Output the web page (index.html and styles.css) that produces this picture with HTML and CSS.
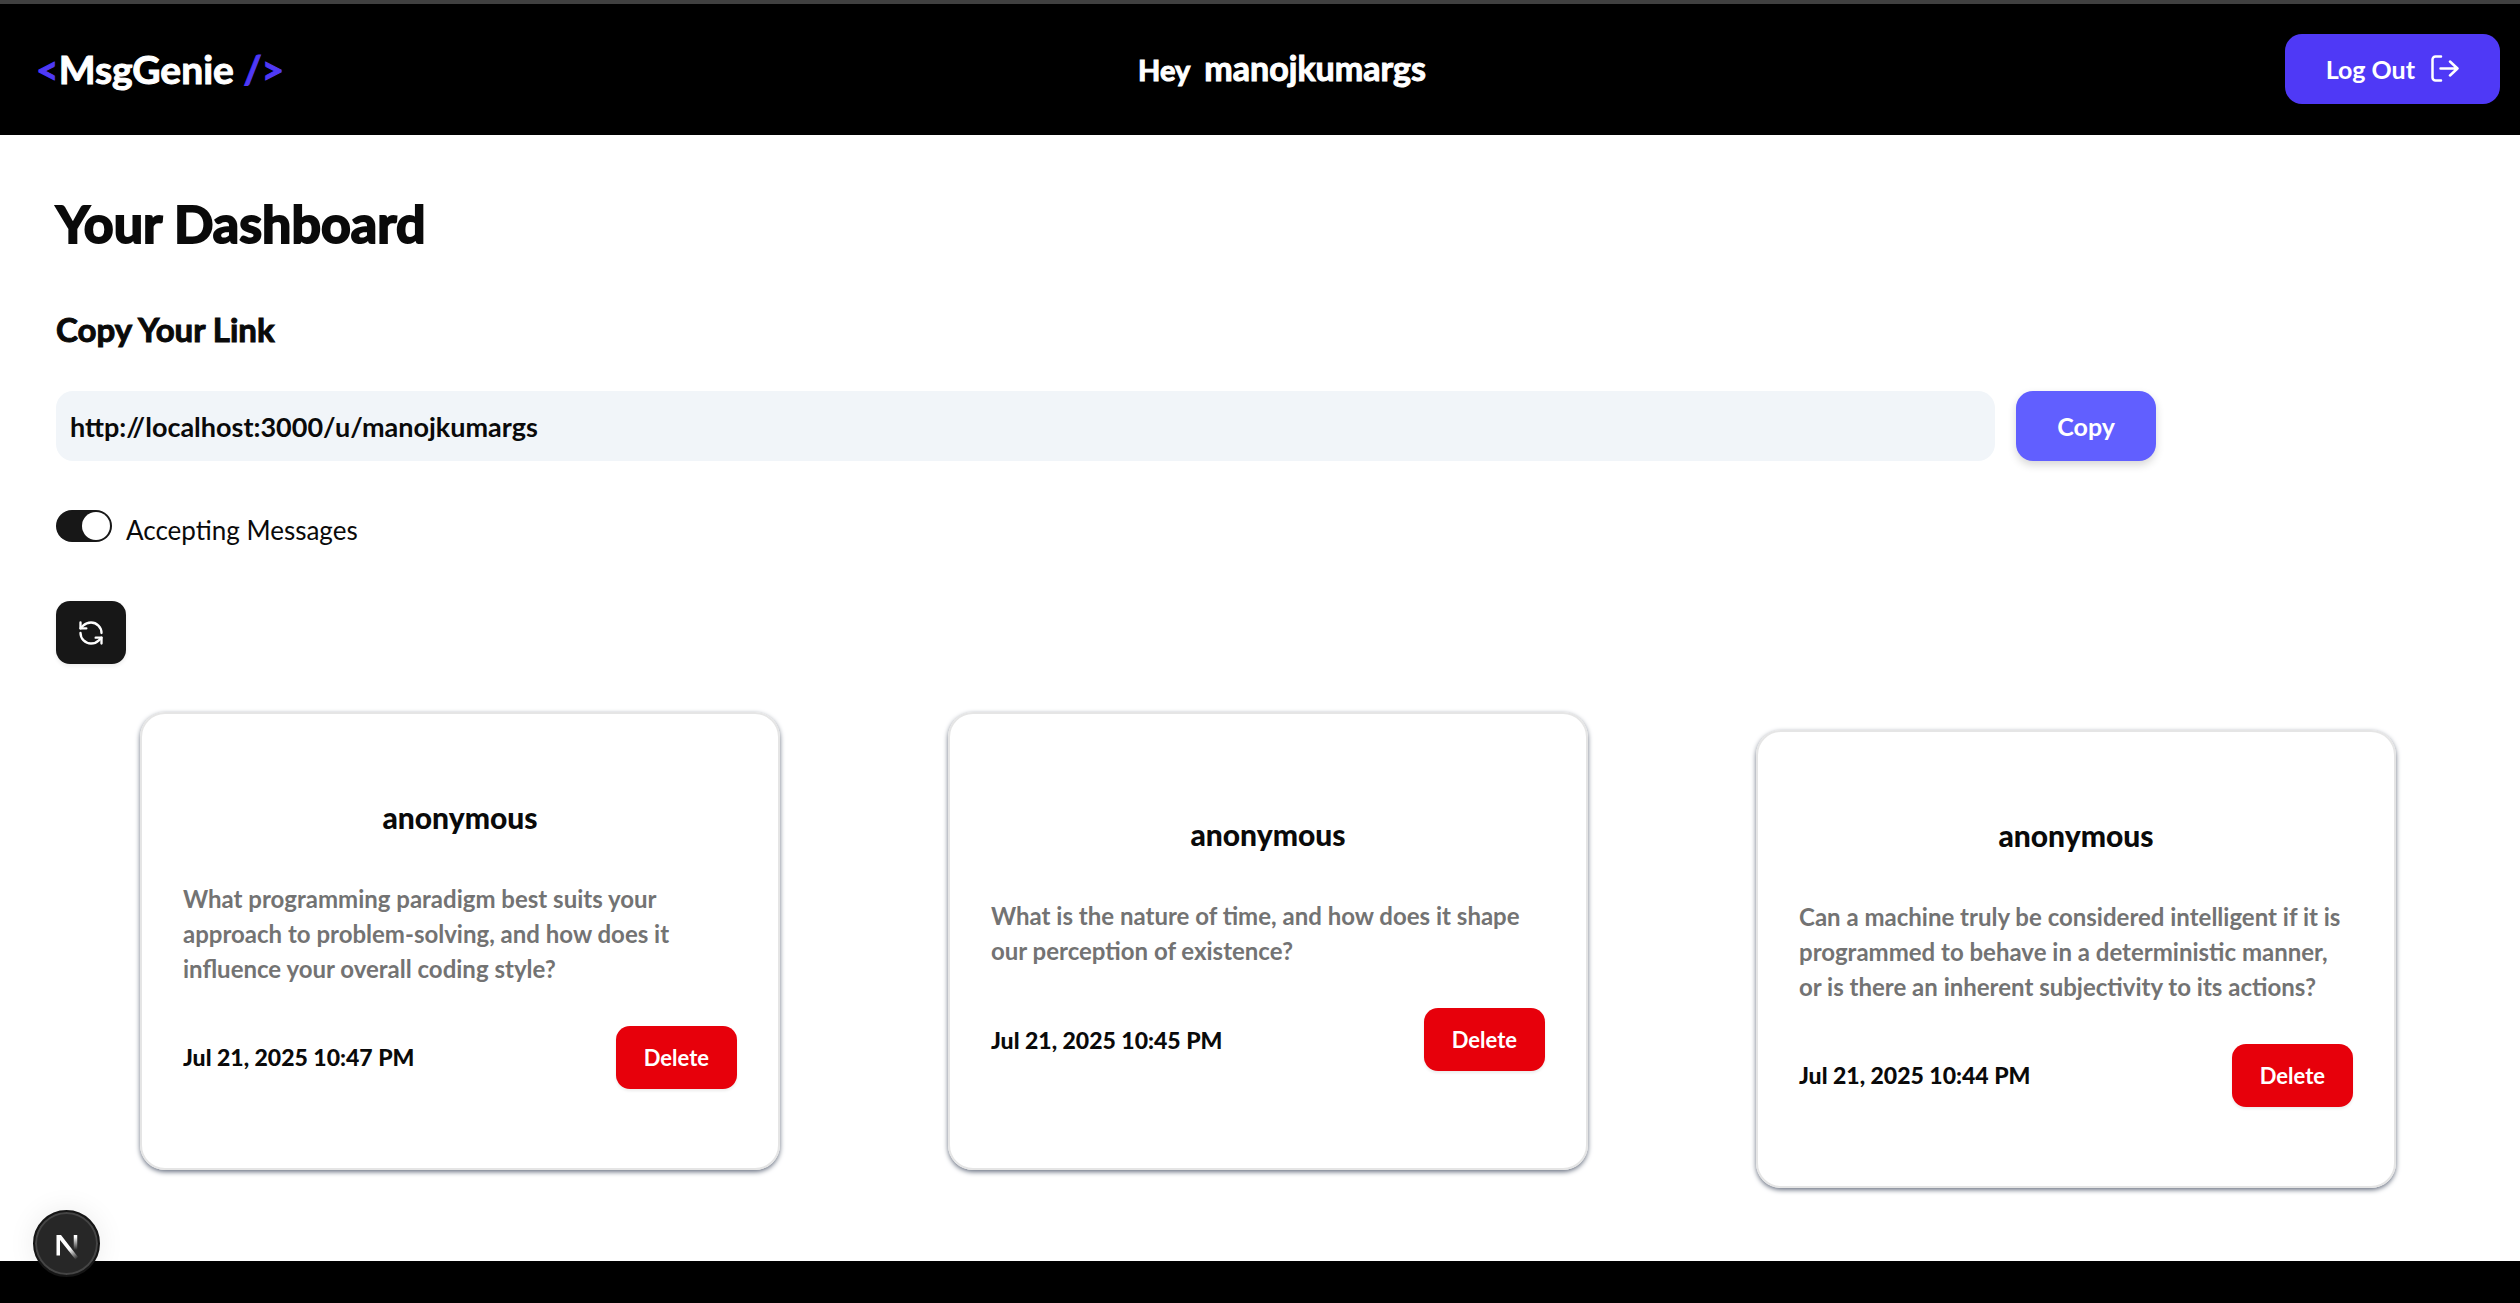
FILE: index.html
```html
<!DOCTYPE html>
<html lang="en">
<head>
<meta charset="utf-8">
<title>MsgGenie</title>
<link rel="stylesheet" href="styles.css">
</head>
<body>
<header class="navbar">
  <a class="logo" href="#"><span class="accent">&lt;</span>MsgGenie <span class="accent">/&gt;</span></a>
  <p class="greeting">Hey <strong class="user">manojkumargs</strong></p>
  <button class="btn btn-logout" type="button">Log Out
    <svg class="icon" viewBox="0 0 28 28" fill="none" stroke="currentColor" stroke-width="2.500" stroke-linecap="round" stroke-linejoin="round" aria-hidden="true"><path d="M10 1.500H4.500a3 3 0 0 0-3 3v18a3 3 0 0 0 3 3H10M9.500 13.500h17M19 6.500l7.500 7L19 20.500"/></svg>
  </button>
</header>
<main class="dashboard">
  <h1 class="title">Your Dashboard</h1>
  <h2 class="subtitle"><label for="link">Copy Your Link</label></h2>
  <div class="link-row">
    <input class="link-input" id="link" type="text" value="http://localhost:3000/u/manojkumargs" readonly>
    <button class="btn btn-copy" type="button">Copy</button>
  </div>
  <div class="switch-row">
    <input class="switch" id="accepting" type="checkbox" role="switch" checked>
    <label class="switch-label" for="accepting">Accepting Messages</label>
  </div>
  <button class="btn-refresh" type="button" aria-label="Refresh messages">
    <svg class="icon" viewBox="0 0 24 24" fill="none" stroke="currentColor" stroke-width="2" stroke-linecap="round" stroke-linejoin="round" aria-hidden="true"><path d="M21 12a9 9 0 0 0-9-9 9.750 9.750 0 0 0-6.740 2.740L3 8"/><path d="M3 3v5h5"/><path d="M3 12a9 9 0 0 0 9 9 9.750 9.750 0 0 0 6.740-2.740L21 16"/><path d="M16 16h5v5"/></svg>
  </button>
  <section class="messages" aria-label="Messages">
    <article class="card">
      <h3 class="sender">anonymous</h3>
      <p class="message">What programming paradigm best suits your<br>approach to problem-solving, and how does it<br>influence your overall coding style?</p>
      <div class="card-footer"><time class="date" datetime="2025-07-21T22:47">Jul 21, 2025 10:47 PM</time><button class="btn-delete" type="button">Delete</button></div>
    </article>
    <article class="card">
      <h3 class="sender">anonymous</h3>
      <p class="message">What is the nature of time, and how does it shape<br>our perception of existence?</p>
      <div class="card-footer"><time class="date" datetime="2025-07-21T22:45">Jul 21, 2025 10:45 PM</time><button class="btn-delete" type="button">Delete</button></div>
    </article>
    <article class="card card-lowered">
      <h3 class="sender">anonymous</h3>
      <p class="message">Can a machine truly be considered intelligent if it is<br>programmed to behave in a deterministic manner,<br>or is there an inherent subjectivity to its actions?</p>
      <div class="card-footer"><time class="date" datetime="2025-07-21T22:44">Jul 21, 2025 10:44 PM</time><button class="btn-delete" type="button">Delete</button></div>
    </article>
  </section>
</main>
<button class="dev-badge" type="button" aria-label="Open developer tools">
  <svg class="dev-logo" viewBox="0 0 40 40" fill="none" aria-hidden="true">
    <defs>
      <linearGradient id="diagonal" gradientUnits="userSpaceOnUse" x1="23" y1="25" x2="30" y2="35"><stop stop-color="#fff"/><stop offset="1" stop-color="#fff" stop-opacity="0"/></linearGradient>
      <linearGradient id="stem" gradientUnits="userSpaceOnUse" x1="28" y1="13" x2="28" y2="26"><stop stop-color="#fff"/><stop offset="1" stop-color="#fff" stop-opacity="0"/></linearGradient>
    </defs>
    <path d="M9.500 11h4.500l17 22-2.500 2.500L13 16v15.500H9.500z" fill="url(#diagonal)"/>
    <path d="M28.500 11v15" stroke="url(#stem)" stroke-width="3.500"/>
  </svg>
</button>
</body>
</html>
```
FILE: styles.css
```css
* { box-sizing: border-box; }

body {
  display: flex;
  flex-direction: column;
  min-height: 100vh;
  margin: 0;
  background: #000;
  color: #0a0a0a;
  font-family: Lato, "Open Sans", sans-serif;
}

h1, h2, h3, p { margin: 0; }

button, input { border: 0; font: inherit; }

button { cursor: pointer; }

.navbar {
  display: grid;
  grid-template-columns: 1fr auto 1fr;
  align-items: center;
  padding: 30px 20px 31px 36px;
  border-top: 4px solid #404040;
  background: #000;
  color: #fff;
}

.logo {
  justify-self: start;
  color: #fff;
  font-size: 39px;
  font-weight: 700;
  line-height: 48px;
  text-decoration: none;
  -webkit-text-stroke: 1px;
}

.accent { color: #4f39f6; }

.greeting {
  display: flex;
  align-items: baseline;
  gap: 14px;
  padding-left: 28px;
  font-size: 29px;
  font-weight: 700;
  line-height: 40px;
  -webkit-text-stroke: 1px;
}

.user {
  font-size: 34px;
  font-weight: 700;
}

.btn {
  display: flex;
  align-items: center;
  justify-content: center;
  gap: 16px;
  height: 70px;
  padding: 0 41px;
  border-radius: 17px;
  color: #fff;
  font-size: 25px;
  font-weight: 700;
}

.btn-logout {
  justify-self: end;
  background: #4f39f6;
}

.icon { width: 28px; height: 28px; }

.dashboard {
  padding: 56px 40px 73px 56px;
  background: #fff;
}

.title {
  font-size: 52px;
  font-weight: 700;
  line-height: 64px;
  -webkit-text-stroke: 2px;
}

.subtitle {
  margin-top: 50px;
  font-size: 33px;
  font-weight: 700;
  line-height: 48px;
  -webkit-text-stroke: 1px;
}

.link-row {
  display: flex;
  gap: 21px;
  width: 2100px;
  max-width: 100%;
  margin-top: 38px;
}

.link-input {
  flex: 1;
  min-width: 0;
  height: 70px;
  padding: 0 14px;
  border-radius: 17px;
  background: #f1f5f9;
  color: #0a0a0a;
  font-size: 27px;
  font-weight: 700;
}

.btn-copy {
  background: #615fff;
  box-shadow: 0 4px 8px rgb(0 0 0 / 16%);
}

.switch-row {
  display: flex;
  align-items: flex-start;
  gap: 14px;
  margin-top: 49px;
}

.switch {
  display: flex;
  align-items: center;
  width: 56px;
  height: 32px;
  margin: 0;
  padding: 2px;
  border-radius: 16px;
  background: #171717;
  appearance: none;
}

.switch::before {
  width: 28px;
  height: 28px;
  border-radius: 50%;
  background: #fff;
  content: "";
}

.switch:checked { justify-content: flex-end; }

.switch-label {
  font-size: 26px;
  line-height: 40px;
}

.btn-refresh {
  display: flex;
  align-items: center;
  justify-content: center;
  width: 70px;
  height: 63px;
  margin-top: 51px;
  padding: 0;
  border-radius: 14px;
  background: #171717;
  box-shadow: 0 2px 4px rgb(0 0 0 / 8%);
  color: #fff;
}

.messages {
  display: grid;
  grid-template-columns: repeat(3, 1fr);
  align-items: start;
  justify-items: center;
  margin-top: 48px;
}

.card {
  display: flex;
  flex-direction: column;
  justify-content: center;
  width: 640px;
  max-width: 100%;
  min-height: 458px;
  padding: 45px 41px 42px;
  border: 2px solid #e5e5e5;
  border-radius: 25px;
  box-shadow: 0 2px 5px #6a7282;
}

.card-lowered { margin-top: 18px; }

.sender {
  font-size: 30px;
  font-weight: 900;
  line-height: 40px;
  text-align: center;
}

.message {
  margin-top: 44px;
  color: #737373;
  font-size: 24px;
  font-weight: 700;
  line-height: 35px;
}

.card-footer {
  display: flex;
  align-items: center;
  justify-content: space-between;
  margin-top: 40px;
}

.date {
  font-size: 23px;
  font-weight: 900;
}

.btn-delete {
  height: 63px;
  padding: 0 28px;
  border-radius: 14px;
  background: #e7000b;
  box-shadow: 0 2px 3px rgb(0 0 0 / 8%);
  color: #fff;
  font-size: 22px;
  font-weight: 700;
}

.dev-badge {
  position: fixed;
  bottom: 26px;
  left: 33px;
  display: flex;
  align-items: center;
  justify-content: center;
  width: 67px;
  height: 67px;
  padding: 0;
  border: 2px solid #151515;
  border-radius: 50%;
  background: #272727;
  box-shadow: inset 0 0 0 2px #454545, 0 0 28px rgb(0 0 0 / 8%);
}

.dev-logo { width: 40px; height: 40px; }
```
